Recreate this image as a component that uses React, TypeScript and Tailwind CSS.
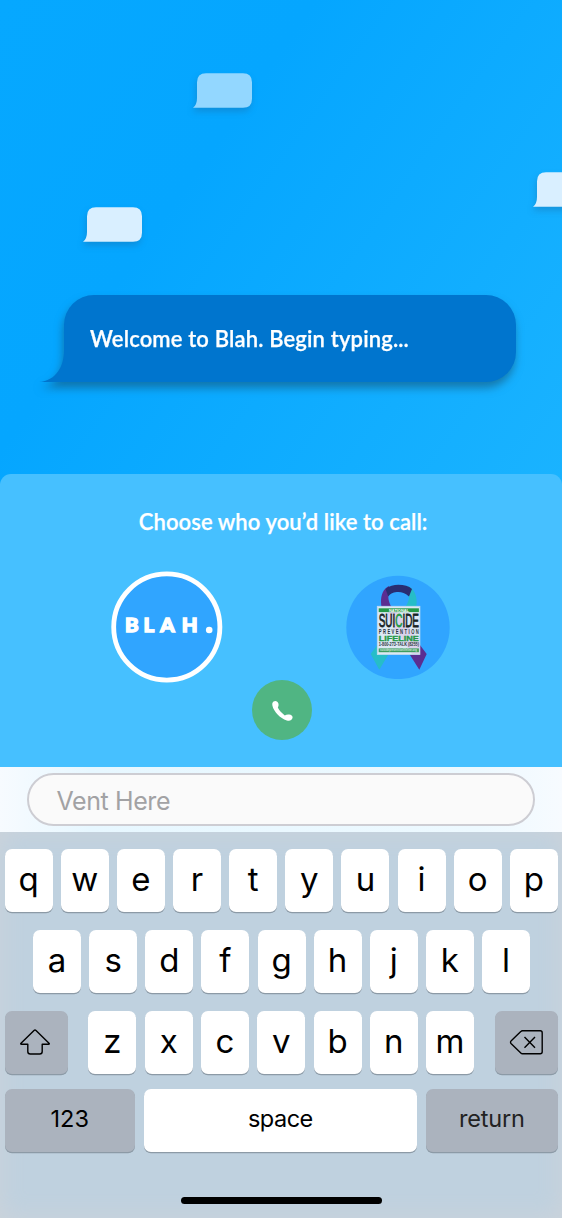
import type { ReactNode } from "react";

function MiniBubble({ className }: { className: string }) {
  return (
    <svg
      viewBox="0 0 60 36"
      className={`absolute h-9 w-[60px] overflow-visible drop-shadow-[-1px_4px_3px_rgba(30,90,140,0.3)] ${className}`}
      aria-hidden="true"
    >
      <path
        d="M13 0.3H50Q59 0.3 59 9.3V25.7Q59 34.7 50 34.7H0Q4 32 4 25V9.3Q4 0.3 13 0.3Z"
        fill="currentColor"
      />
    </svg>
  );
}

function WelcomeBubble() {
  return (
    <div className="relative ml-[64px] mt-[295px] flex h-[87px] w-[452px] items-center rounded-[30px] rounded-bl-none bg-[#0075ce] pl-[26px] drop-shadow-[-1px_6px_4px_rgba(20,85,120,0.6)]">
      <svg viewBox="0 0 26 31" className="absolute bottom-0 -left-[25px] h-[31px] w-[26px]" aria-hidden="true">
        <path d="M26 0H25C25 15 17 30 0 31H26Z" fill="#0075ce" />
      </svg>
      <p className="font-['Lato',sans-serif] text-[22px] font-semibold leading-[28px] tracking-[0.15px] whitespace-nowrap text-white [-webkit-text-stroke:0.25px_white]">
        Welcome to Blah. Begin typing...
      </p>
    </div>
  );
}

function BlahLogo() {
  return (
    <svg viewBox="0 0 112 112" className="size-[112px]" role="img">
      <circle cx="55.8" cy="56" r="53.1" fill="#30a5ff" stroke="#fff" strokeWidth="4.8" />
      <text
        transform="scale(1.08 1)"
        x="12.9 30.2 45.5 65.6"
        y="61.2"
        className="fill-white stroke-white font-['Lato',sans-serif] text-[19px] font-black"
        strokeWidth="1.3"
      >
        BLAH
      </text>
      <circle cx="98.2" cy="59" r="3.3" fill="#fff" />
    </svg>
  );
}

function LifelineLogo() {
  return (
    <svg viewBox="0 0 104 104" className="size-[104px]" role="img">
      <circle cx="52" cy="52.4" r="51.7" fill="#30a5ff" />
      <path d="M62 11C68 14 70.7 20 70.7 27C70.7 36 65 44 58 53L33.3 94.8L24.7 79L52 42C59 33 63 28 63 21.5Z" fill="#26bdc8" />
      <path d="M43 11C37 14 35 20 35 27C35 36 40 44 47 53L73.3 94.8L80.7 79L53 42C46 34 42.3 28 42.3 21.5Z" fill="#5b2d91" />
      <path d="M39.5 14C43 11 48 9.8 52.3 9.8C58 9.8 63 11 66 14L63 21.5C59 18 56 17 52.3 17C48 17 45 18 42.3 21.5Z" fill="#292d72" />
      <rect x="31.3" y="31.3" width="42.6" height="48.2" fill="#dce8f3" stroke="#c3dbef" strokeWidth="0.8" />
      <path d="M42 36H50L73.5 66V79H66L42 44Z" fill="#d9c9e8" opacity=".7" />
      <rect x="32.7" y="33.3" width="40.2" height="3.8" fill="#249947" />
      <g className="font-['Liberation_Sans',sans-serif] font-bold">
        <text x="43" y="36.6" textLength="20" lengthAdjust="spacingAndGlyphs" fill="#fff" fontSize="3.6">NATIONAL</text>
        <text x="32.7" y="52.3" textLength="40.2" lengthAdjust="spacingAndGlyphs" fill="#172323" fontSize="18.6" className="font-normal" stroke="#172323" strokeWidth="0.8">
          SUI<tspan fill="#249947" stroke="#249947">C</tspan>IDE
        </text>
        <text transform="scale(0.65 1)" x="50.3" y="58.8" textLength="61.8" fill="#26333b" fontSize="6.4">PREVENTION</text>
        <text x="32.7" y="65.9" textLength="40.2" lengthAdjust="spacingAndGlyphs" fill="#249947" stroke="#249947" strokeWidth="0.3" fontSize="7.5">LIFELINE</text>
        <text x="32.7" y="71.2" textLength="40.2" lengthAdjust="spacingAndGlyphs" fill="#26333b" fontSize="4.5">1-800-273-TALK (8255)</text>
        <rect x="32.7" y="73.4" width="40.2" height="3.8" fill="#3e9d60" />
        <text x="34" y="76.4" textLength="37" lengthAdjust="spacingAndGlyphs" fill="#d5e7df" fontSize="3.2">suicidepreventionlifeline.org</text>
      </g>
    </svg>
  );
}

function Key({ children, className = "w-12 bg-white text-[33px]" }: { children: ReactNode; className?: string }) {
  return (
    <button
      className={`flex h-[63px] shrink-0 items-center justify-center rounded-[7px] font-['Inter',sans-serif] font-normal leading-none text-black shadow-[0_1.3px_0_#8c9aa6] ${className}`}
    >
      {children}
    </button>
  );
}

function Letters({ value }: { value: string }) {
  return value.split("").map((letter) => (
    <Key key={letter}>
      <span className="-translate-y-px">{letter}</span>
    </Key>
  ));
}

function Keyboard() {
  return (
    <section className="relative h-[386px] bg-[#bfd1df] pt-[17px] shadow-[inset_0_0_24px_#cdd3da]">
      <div className="flex justify-between pr-[4.5px] pl-[4.6px]">
        <Letters value="qwertyuiop" />
      </div>
      <div className="mt-[18px] flex justify-between pr-[32.3px] pl-[33px]">
        <Letters value="asdfghjkl" />
      </div>
      <div className="mt-[18px] flex justify-between pr-[4.5px] pl-[4.6px]">
        <Key className="w-[63px] bg-[#abb3be]">
          <svg viewBox="0 0 30 26" className="h-[26px] w-[30px] -translate-x-px -translate-y-px" fill="none" stroke="black" strokeWidth="1.4" strokeLinejoin="round">
            <path d="M14 1.4Q15 .4 16 1.4L29 14.3Q29.8 15.3 28.5 15.3H22.2V22.5Q22.2 25 19.7 25H10.3Q7.8 25 7.8 22.5V15.3H1.5Q.2 15.3 1 14.3Z" />
          </svg>
        </Key>
        <div className="flex w-[385.7px] justify-between">
          <Letters value="zxcvbnm" />
        </div>
        <Key className="w-[63px] bg-[#abb3be]">
          <svg viewBox="0 0 34 26" className="h-[26px] w-[34px] translate-x-[0.5px] -translate-y-[0.5px]" fill="none" stroke="black" strokeWidth="1.4" strokeLinejoin="round">
            <path d="M13 1.3H30.7Q32.7 1.3 32.7 3.3V22.3Q32.7 24.3 30.7 24.3H13Q12 24.3 11.3 23.5L1.5 14Q.4 12.8 1.5 11.6L11.3 2.1Q12 1.3 13 1.3ZM15 7.5L25.5 18.3M25.5 7.5L15 18.3" />
          </svg>
        </Key>
      </div>
      <div className="mt-[15px] flex justify-between pr-[4.5px] pl-[4.6px]">
        <Key className="w-[130.3px] bg-[#abb3be] text-[23.5px]">
          <span className="-translate-y-[2px]">123</span>
        </Key>
        <Key className="w-[273px] bg-white text-[23.5px] tracking-[-0.5px]">
          <span className="-translate-y-[2px]">space</span>
        </Key>
        <Key className="w-[132px] bg-[#abb3be] text-[23.5px] tracking-[-0.15px]">
          <span className="-translate-y-[2px] text-[#222]">return</span>
        </Key>
      </div>
      <div className="mx-auto mt-[44.5px] h-[7.5px] w-[201px] rounded-full bg-black" />
    </section>
  );
}

export default function App() {
  return (
    <main className="h-[1218px] w-[562.4px] overflow-hidden bg-[#46c0ff]">
      <section className="relative flex h-[484px] overflow-hidden bg-[linear-gradient(125deg,#06a8ff_0%,#05a6ff_35%,#1ab3ff_100%)]">
        <MiniBubble className="top-[73px] left-[193px] text-[#93d7ff]" />
        <MiniBubble className="top-[206.5px] left-[83px] text-[#d9efff]" />
        <MiniBubble className="top-[172px] left-[533px] text-[#d9efff]" />
        <WelcomeBubble />
      </section>
      <section className="relative -mt-[10px] flex h-[292.5px] flex-col items-center rounded-t-[11px] bg-[#46c0ff]">
        <h1 className="mt-[34px] ml-[4px] font-['Lato',sans-serif] text-[22px] font-semibold leading-[28px] tracking-[0.08px] whitespace-nowrap text-white [-webkit-text-stroke:0.25px_white]">
          Choose who you’d like to call:
        </h1>
        <div className="mt-[35px] flex w-full items-center justify-between pr-[112.4px] pl-[110.5px]">
          <BlahLogo />
          <LifelineLogo />
        </div>
        <button className="-mt-[3px] ml-[2px] flex size-[60px] items-center justify-center rounded-full bg-[#50b583]" aria-label="Call">
          <svg viewBox="0 0 21 21" className="size-[21px] translate-y-[0.5px]" fill="white">
            <path d="M1.6 1C3.5-.3 5.8.8 6.4 3C6.8 4.7 6.5 5.7 5.8 7C7.3 10 9.7 12.6 12.8 14.9C14 14.1 15.5 13.8 17.2 14C19.7 14.4 21.1 15.8 20.4 17.8C19.7 20 17.4 20.8 14.8 19.9C8 17.6 1.9 11 .5 5.4C0 3.3.3 1.9 1.6 1Z" />
          </svg>
        </button>
      </section>
      <section className="flex h-[65.5px] items-center justify-center bg-[linear-gradient(90deg,#f7fbff_0%,#e7f7ff_16%,#edf9ff_85%,#f7fbff_100%)]">
        <input
          className="ml-[0.5px] h-[53px] w-[508px] rounded-full border-2 border-[#cdcdd3] bg-[#fafafa] pt-[3px] pl-[27px] font-['Inter',sans-serif] text-[25px] tracking-[-0.4px] text-black outline-none placeholder:text-[#a2a2a4]"
          placeholder="Vent Here"
        />
      </section>
      <Keyboard />
    </main>
  );
}
